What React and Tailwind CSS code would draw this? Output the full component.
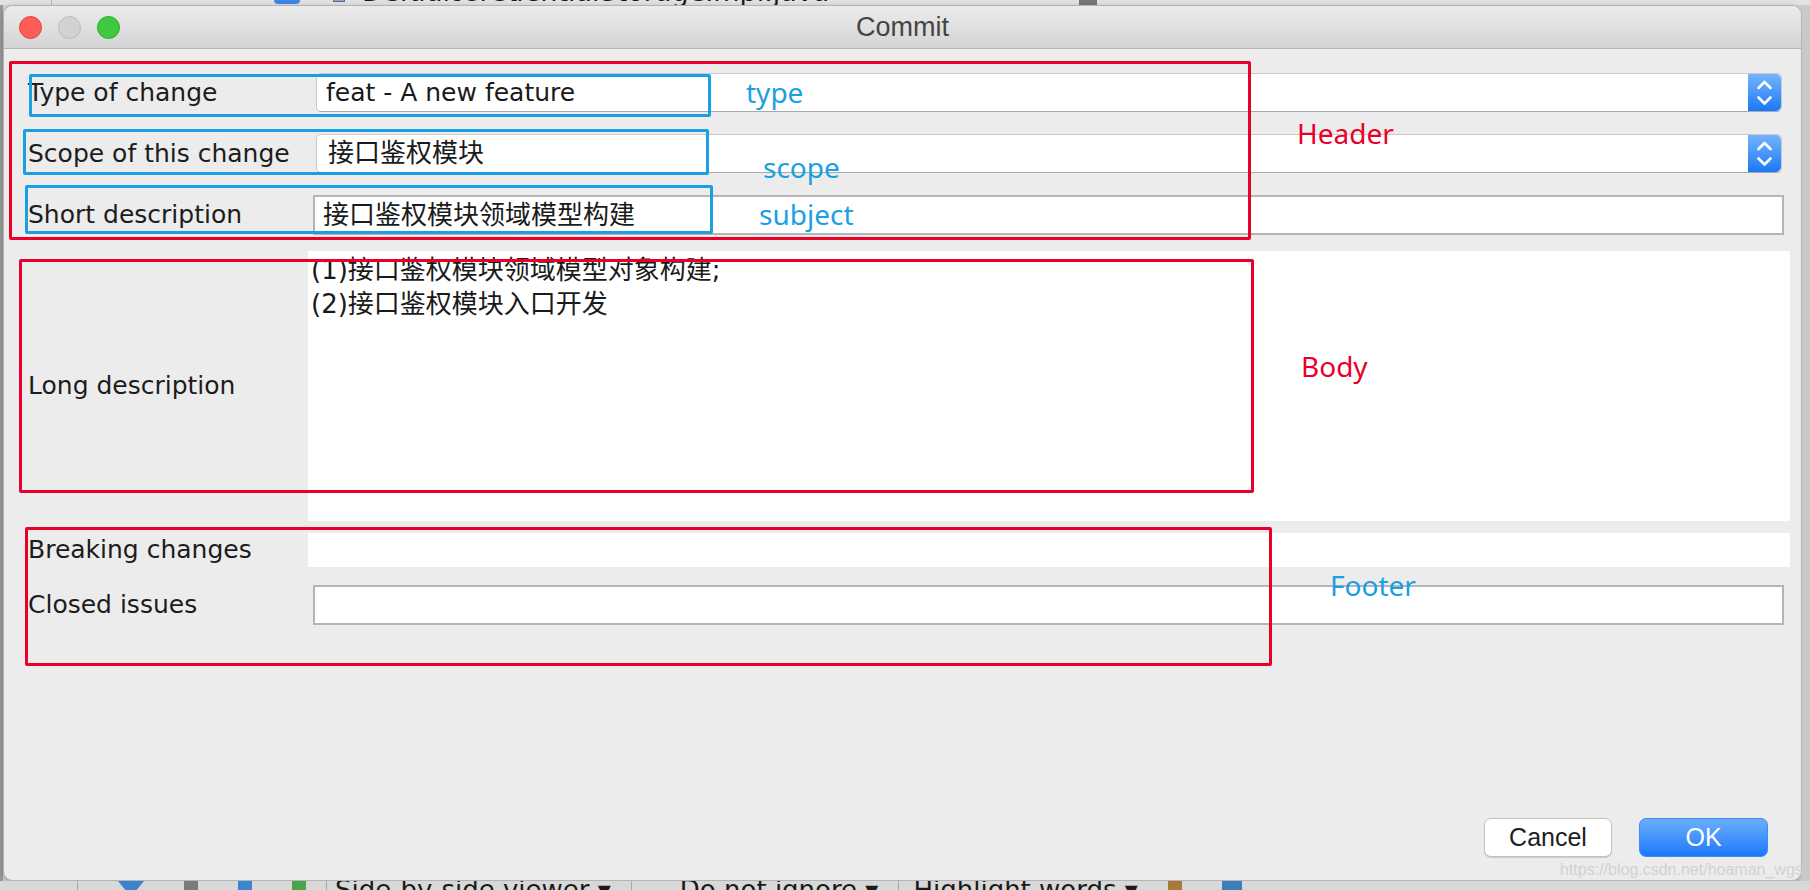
import React from "react";

const formFont = "font-['DejaVu_Sans','Noto_Sans_CJK_SC',sans-serif]";
const noteFont = "font-['Noto_Sans','Noto_Sans_CJK_SC',sans-serif]";

const Stepper = () => (
  <div className="w-[33px] h-full rounded-r-[5px] bg-gradient-to-b from-[#72b3fc] to-[#1877f7] flex items-center justify-center">
    <svg width="33" height="40" viewBox="0 0 33 40" fill="none">
      <polyline points="10.5,15 16.5,9 22.5,15" stroke="white" strokeWidth="2.6" strokeLinecap="round" strokeLinejoin="round" />
      <polyline points="10.5,24.5 16.5,30.5 22.5,24.5" stroke="white" strokeWidth="2.6" strokeLinecap="round" strokeLinejoin="round" />
    </svg>
  </div>
);

const Label = ({ children }) => (
  <div className={`w-[304px] shrink-0 pl-[24px] text-[25px] text-[#1c1c1c] ${formFont}`}>{children}</div>
);

const Combo = ({ value, cjk }) => (
  <div className="flex-1 ml-[8px] mr-[19px] h-[39px] flex bg-white rounded-[5px] border border-[#cacaca] border-b-[#a9a9a9]">
    <div
      className={`flex-1 flex items-center text-[#1a1a1a] ${formFont} ${
        cjk ? "pl-[11px] text-[26px]" : "pl-[9px] text-[25px]"
      }`}
    >
      {value}
    </div>
    <Stepper />
  </div>
);

const TextField = ({ value }) => (
  <div className={`flex-1 ml-[5px] mr-[17px] h-[40px] flex items-center bg-white border-2 border-[#b5b5b5] pl-[8px] text-[26px] text-[#1a1a1a] ${formFont}`}>
    {value}
  </div>
);

const Box = ({ className }) => <div className={`absolute rounded-[2px] ${className}`} />;

const Note = ({ className, children }) => (
  <span className={`absolute text-[28px] leading-[28px] ${noteFont} ${className}`}>{children}</span>
);

export default function App() {
  return (
    <div className="relative w-[1810px] h-[890px] overflow-hidden bg-[#d3d3d3] flex flex-col">
      {/* IDE behind the dialog, top */}
      <div className="h-[5px] shrink-0 bg-[#e2e2e2] overflow-hidden">
        <div className="-mt-[22px] h-[27px] flex items-center">
          <div className="w-[52px] h-full border-r border-[#b9b9b9]" />
          <div className="ml-[222px] w-[26px] h-[24px] rounded-[4px] bg-[#3f86e5]" />
          <div className="ml-[33px] w-[12px] h-[20px] bg-[#8aa7c7] border border-[#5a6f87]" />
          <span className="ml-[17px] text-[27px] leading-[27px] text-[#1a1a1a] font-['DejaVu_Sans',sans-serif]">
            DefaultCredentialStorageImpl.java
          </span>
          <div className="ml-[250px] w-[18px] h-full bg-[#777]" />
        </div>
      </div>

      <div className="flex flex-1 min-h-0">
        <div className="w-[3px] bg-[#9a9a9a]" />

        {/* dialog window */}
        <div className="flex-1 flex flex-col rounded-[10px] overflow-hidden border border-[#b4b4b4] bg-[#ececec] shadow-[0_2px_6px_rgba(0,0,0,0.25)]">
          <div className="h-[43px] shrink-0 grid grid-cols-[1fr_auto_1fr] items-center border-b border-[#b5b5b5] bg-gradient-to-b from-[#ececec] to-[#d4d4d4]">
            <div className="flex items-center gap-[16px] pl-[15px]">
              <span className="w-[23px] h-[23px] rounded-full bg-[#fd5d57] border border-[#e0443e]" />
              <span className="w-[23px] h-[23px] rounded-full bg-[#d2d2d2] border border-[#bcbcbc]" />
              <span className="w-[23px] h-[23px] rounded-full bg-[#3ec93f] border border-[#2aab2b]" />
            </div>
            <div className="text-[27px] text-[#444] font-['Liberation_Sans',sans-serif]">Commit</div>
            <div />
          </div>

          <div className="flex-1 flex flex-col pt-[24px] pb-[23px]">
            <div className="flex items-center">
              <Label>Type of change</Label>
              <Combo value="feat - A new feature" />
            </div>
            <div className="flex items-center mt-[22px]">
              <Label>Scope of this change</Label>
              <Combo value="接口鉴权模块" cjk />
            </div>
            <div className="flex items-center mt-[22px]">
              <Label>Short description</Label>
              <TextField value="接口鉴权模块领域模型构建" />
            </div>
            <div className="flex items-center mt-[16px]">
              <Label>Long description</Label>
              <div className={`flex-1 mr-[11px] h-[270px] bg-white pl-[3px] pt-[2px] text-[26px] leading-[34px] text-[#1a1a1a] ${formFont}`}>
                <div>(1)接口鉴权模块领域模型对象构建;</div>
                <div>(2)接口鉴权模块入口开发</div>
              </div>
            </div>
            <div className="flex items-center mt-[10px]">
              <Label>Breaking changes</Label>
              <div className="flex-1 mr-[11px] h-[34px] bg-white" />
            </div>
            <div className="flex items-center mt-[16px]">
              <Label>Closed issues</Label>
              <TextField value="" />
            </div>

            <div className="flex-1" />

            <div className="flex justify-end gap-[27px] pr-[33px]">
              <button
                type="button"
                className="w-[128px] h-[39px] rounded-[7px] bg-white border border-[#c3c3c3] shadow-[0_1px_1px_rgba(0,0,0,0.15)] text-[25px] text-[#1e1e1e] font-['Liberation_Sans',sans-serif]"
              >
                Cancel
              </button>
              <button
                type="button"
                className="w-[129px] h-[39px] rounded-[7px] bg-gradient-to-b from-[#6aaefd] to-[#1878fa] border border-[#3d8df5] text-[25px] text-white font-['Liberation_Sans',sans-serif]"
              >
                OK
              </button>
            </div>
          </div>
        </div>

        <div className="w-[8px] bg-[#c9c9c9]" />
      </div>

      {/* IDE behind the dialog, bottom toolbar */}
      <div className="h-[9px] shrink-0 bg-[#d8d8d8] overflow-hidden">
        <div className="flex items-start h-[30px] text-[26px] leading-[30px] text-[#1a1a1a] font-['DejaVu_Sans',sans-serif]">
          <div className="ml-[28px] w-[50px] h-full border-r border-[#a8a8a8]" />
          <div className="ml-[40px] w-0 h-0 border-l-[13px] border-r-[13px] border-t-[16px] border-l-transparent border-r-transparent border-t-[#3f82c9]" />
          <div className="ml-[40px] w-[14px] h-[20px] bg-[#7a7a7a]" />
          <div className="ml-[40px] w-[14px] h-[20px] bg-[#3b86d0]" />
          <div className="ml-[40px] w-[14px] h-[20px] bg-[#4aa54a]" />
          <div className="ml-[20px] h-full border-l border-[#a8a8a8] pl-[8px] -mt-[6px]">Side-by-side viewer ▾</div>
          <div className="ml-[20px] h-full border-l border-[#a8a8a8] pl-[48px] -mt-[6px]">Do not ignore ▾</div>
          <div className="ml-[20px] h-full border-l border-[#a8a8a8] pl-[14px] -mt-[6px]">Highlight words ▾</div>
          <div className="ml-[30px] w-[14px] h-[20px] bg-[#a8793a]" />
          <div className="ml-[40px] w-[20px] h-[20px] bg-[#3f7fb8]" />
        </div>
      </div>

      {/* annotations drawn over the dialog */}
      <Box className="left-[9px] top-[61px] w-[1242px] h-[179px] border-[3px] border-[#e8002a]" />
      <Box className="left-[19px] top-[259px] w-[1235px] h-[234px] border-[3px] border-[#e8002a]" />
      <Box className="left-[25px] top-[527px] w-[1247px] h-[139px] border-[3px] border-[#e8002a]" />
      <Box className="left-[29px] top-[74px] w-[682px] h-[43px] border-[3px] border-[#1a9fe3]" />
      <Box className="left-[23px] top-[129px] w-[686px] h-[46px] border-[3px] border-[#1a9fe3]" />
      <Box className="left-[25px] top-[185px] w-[688px] h-[49px] border-[3px] border-[#1a9fe3]" />

      <Note className="left-[746px] top-[78px] text-[#1a9fe3]">type</Note>
      <Note className="left-[763px] top-[153px] text-[#1a9fe3]">scope</Note>
      <Note className="left-[759px] top-[200px] text-[#1a9fe3]">subject</Note>
      <Note className="left-[1297px] top-[119px] text-[#e8002a]">Header</Note>
      <Note className="left-[1301px] top-[352px] text-[#e8002a]">Body</Note>
      <Note className="left-[1330px] top-[571px] text-[#1a9fe3]">Footer</Note>

      <span className="absolute left-[1560px] top-[861px] text-[16px] leading-[18px] text-[#d2d2d2] font-['Liberation_Sans',sans-serif]">
        https://blog.csdn.net/hoaman_wgs
      </span>
    </div>
  );
}
